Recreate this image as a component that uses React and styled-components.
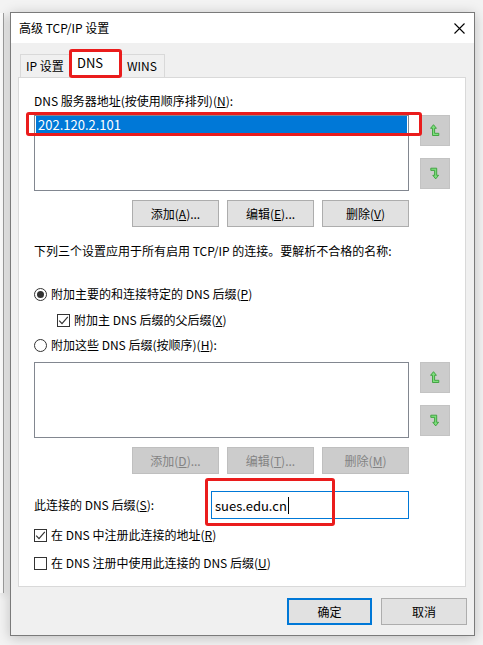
import React from "react"
import styled, { createGlobalStyle } from "styled-components"

const GlobalStyle = createGlobalStyle`
  html, body {
    margin: 0;
    padding: 0;
  }
  body {
    background: #f3f3f3;
    font-family: "Noto Sans CJK SC", "Noto Sans", sans-serif;
    font-size: 12px;
    color: #000;
  }
  * {
    box-sizing: border-box;
  }
`

const Desktop = styled.div`
  display: flex;
  align-items: flex-start;
  width: 483px;
  height: 645px;
  overflow: hidden;
`

const BackWindow = styled.div`
  width: 4px;
  height: 580px;
  margin-top: 13px;
  background: #fbfbfb;
  border-right: 1px solid #9c9c9c;
  box-shadow: 2px 3px 6px rgba(0, 0, 0, 0.12);
`

const Dialog = styled.div`
  margin: 12px 0 0 6px;
  width: 465px;
  height: 624px;
  border: 1px solid #7a7a7a;
  background: #f0f0f0;
  display: flex;
  flex-direction: column;
  box-shadow: 0 2px 12px rgba(0, 0, 0, 0.22);
`

const TitleBar = styled.div`
  height: 30px;
  flex: 0 0 30px;
  background: #fff;
  display: flex;
  align-items: center;
  justify-content: space-between;
  padding: 0 9px 0 8px;
  line-height: 16px;
`

const CloseIcon = styled.svg`
  width: 11px;
  height: 11px;
  display: block;
`

const Body = styled.div`
  flex: 1;
  display: flex;
  flex-direction: column;
  padding: 7px 6px 0 7px;
`

const TabRow = styled.div`
  display: flex;
  align-items: flex-end;
  padding-left: 2px;
  height: 27px;
`

const Tab = styled.div`
  position: relative;
  height: ${(p) => (p.$active ? "28px" : "23px")};
  width: ${(p) => p.$w}px;
  margin-left: ${(p) => (p.$active ? "-1px" : "0")};
  margin-right: ${(p) => (p.$active ? "-1px" : "0")};
  margin-bottom: ${(p) => (p.$active ? "-1px" : "0")};
  z-index: ${(p) => (p.$active ? 2 : 1)};
  background: ${(p) => (p.$active ? "#fff" : "#f0f0f0")};
  border: 1px solid #d9d9d9;
  border-bottom: none;
  padding: ${(p) => (p.$active ? "4px 0 0 7px" : "3px 0 0 5px")};
  line-height: 16px;
  font-size: ${(p) => (p.$active ? "13px" : "12px")};
`

const Highlight = styled.div`
  position: absolute;
  border: 3px solid #ea1c1c;
  border-radius: 3px;
  pointer-events: none;
  z-index: 5;
  top: ${(p) => p.$top}px;
  left: ${(p) => p.$left}px;
  width: ${(p) => p.$w}px;
  height: ${(p) => p.$h}px;
`

const Panel = styled.div`
  height: 510px;
  margin-right: 2px;
  background: #fff;
  border: 1px solid #d9d9d9;
  padding: 15px 15px 0 15px;
  display: flex;
  flex-direction: column;
`

const Label = styled.div`
  line-height: 16px;
  margin-top: ${(p) => p.$mt || 0}px;
  white-space: nowrap;
`

const ListRow = styled.div`
  display: flex;
  gap: 11px;
  margin-top: ${(p) => p.$mt}px;
`

const ListBox = styled.div`
  width: 375px;
  height: 76px;
  border: 1px solid #828790;
  background: #fff;
  padding: 0 1px;
`

const SelectedItem = styled.div`
  position: relative;
  height: 17px;
  line-height: 17px;
  background: #0078d7;
  color: #fff;
  padding-left: 2px;
  font-size: 13px;
`

const MoveColumn = styled.div`
  display: flex;
  flex-direction: column;
  gap: 12px;
`

const MoveButton = styled.div`
  width: 30px;
  height: 31px;
  background: #cccccc;
  border: 1px solid #c3c3c3;
  display: flex;
  align-items: center;
  justify-content: center;
`

const ButtonRow = styled.div`
  width: 375px;
  display: flex;
  justify-content: flex-end;
  gap: 8px;
  margin-top: 9px;
`

const Button = styled.div`
  width: ${(p) => p.$w || 87}px;
  height: 27px;
  display: flex;
  align-items: center;
  justify-content: center;
  background: ${(p) => (p.$disabled ? "#cccccc" : "#e1e1e1")};
  border: ${(p) =>
    p.$primary ? "2px solid #0078d7" : p.$disabled ? "1px solid #bfbfbf" : "1px solid #adadad"};
  color: ${(p) => (p.$disabled ? "#838383" : "#000")};
  line-height: 16px;
  white-space: nowrap;
`

const Option = styled.div`
  display: flex;
  align-items: center;
  gap: 4px;
  line-height: 16px;
  margin-top: ${(p) => p.$mt}px;
  margin-left: ${(p) => p.$ml || 0}px;
  white-space: nowrap;
`

const Radio = styled.span`
  width: 13px;
  height: 13px;
  border: 1px solid #333;
  border-radius: 50%;
  background: #fff;
  display: flex;
  align-items: center;
  justify-content: center;
  &::after {
    content: "";
    display: ${(p) => (p.$checked ? "block" : "none")};
    width: 7px;
    height: 7px;
    border-radius: 50%;
    background: #333;
  }
`

const Box = styled.span`
  width: 13px;
  height: 13px;
  border: 1px solid #333;
  background: #fff;
  display: flex;
  align-items: center;
  justify-content: center;
`

const SuffixRow = styled.div`
  width: 375px;
  display: flex;
  align-items: center;
  justify-content: space-between;
  margin-top: 17px;
`

const InputBox = styled.div`
  position: relative;
  width: 198px;
  height: 28px;
  border: 1px solid #0078d7;
  padding-left: 3px;
  display: flex;
  align-items: center;
  font-size: 13px;
`

const Caret = styled.span`
  display: inline-block;
  width: 1px;
  height: 17px;
  background: #000;
  margin-left: 1px;
`

const Footer = styled.div`
  display: flex;
  justify-content: flex-end;
  gap: 9px;
  padding: 11px 1px 0 0;
`

const UpArrow = () => (
  <svg width="10" height="13" viewBox="0 0 10 13">
    <path
      d="M3.5 0.7 L0.6 4.3 H2.5 V11.5 H8.8 V9.3 H4.6 V4.3 H6.4 Z"
      fill="#7ddf7d"
      stroke="#3a9e3a"
      strokeWidth="0.9"
      strokeLinejoin="round"
    />
  </svg>
)

const DownArrow = () => (
  <svg width="10" height="13" viewBox="0 0 10 13">
    <path
      d="M0.8 1.2 H6.7 V8.3 H8.6 L5.7 11.9 L2.8 8.3 H4.6 V3.4 H0.8 Z"
      fill="#7ddf7d"
      stroke="#3a9e3a"
      strokeWidth="0.9"
      strokeLinejoin="round"
    />
  </svg>
)

const Check = () => (
  <svg width="11" height="11" viewBox="0 0 11 11">
    <path d="M1.2 5.6 L4 8.6 L9.8 1.8" fill="none" stroke="#333" strokeWidth="1.2" />
  </svg>
)

const Movers = () => (
  <MoveColumn>
    <MoveButton>
      <UpArrow />
    </MoveButton>
    <MoveButton>
      <DownArrow />
    </MoveButton>
  </MoveColumn>
)

const App = () => {
  return (
    <Desktop>
      <GlobalStyle />
      <BackWindow />
      <Dialog>
        <TitleBar>
          <span>高级 TCP/IP 设置</span>
          <CloseIcon viewBox="0 0 11 11">
            <path d="M0.5 0.5 L10.5 10.5 M10.5 0.5 L0.5 10.5" stroke="#000" strokeWidth="1.1" />
          </CloseIcon>
        </TitleBar>
        <Body>
          <TabRow>
            <Tab $w={50}>IP 设置</Tab>
            <Tab $w={53} $active>
              DNS
              <Highlight $top={-2} $left={-1} $w={53} $h={29} />
            </Tab>
            <Tab $w={44}>WINS</Tab>
          </TabRow>
          <Panel>
            <Label>
              DNS 服务器地址(按使用顺序排列)(<u>N</u>):
            </Label>
            <ListRow $mt={6}>
              <ListBox>
                <SelectedItem>
                  202.120.2.101
                  <Highlight $top={-4} $left={-10} $w={396} $h={24} />
                </SelectedItem>
              </ListBox>
              <Movers />
            </ListRow>
            <ButtonRow>
              <Button>
                添加(<u>A</u>)...
              </Button>
              <Button>
                编辑(<u>E</u>)...
              </Button>
              <Button>
                删除(<u>V</u>)
              </Button>
            </ButtonRow>
            <Label $mt={16}>下列三个设置应用于所有启用 TCP/IP 的连接。要解析不合格的名称:</Label>
            <Option $mt={27}>
              <Radio $checked />
              <span>
                附加主要的和连接特定的 DNS 后缀(<u>P</u>)
              </span>
            </Option>
            <Option $mt={10} $ml={23}>
              <Box>
                <Check />
              </Box>
              <span>
                附加主 DNS 后缀的父后缀(<u>X</u>)
              </span>
            </Option>
            <Option $mt={9}>
              <Radio />
              <span>
                附加这些 DNS 后缀(按顺序)(<u>H</u>):
              </span>
            </Option>
            <ListRow $mt={9}>
              <ListBox />
              <Movers />
            </ListRow>
            <ButtonRow>
              <Button $disabled>
                添加(<u>D</u>)...
              </Button>
              <Button $disabled>
                编辑(<u>T</u>)...
              </Button>
              <Button $disabled>
                删除(<u>M</u>)
              </Button>
            </ButtonRow>
            <SuffixRow>
              <Label>
                此连接的 DNS 后缀(<u>S</u>):
              </Label>
              <InputBox>
                sues.edu.cn
                <Caret />
                <Highlight $top={-14} $left={-7} $w={130} $h={48} />
              </InputBox>
            </SuffixRow>
            <Option $mt={8}>
              <Box>
                <Check />
              </Box>
              <span>
                在 DNS 中注册此连接的地址(<u>R</u>)
              </span>
            </Option>
            <Option $mt={12}>
              <Box />
              <span>
                在 DNS 注册中使用此连接的 DNS 后缀(<u>U</u>)
              </span>
            </Option>
          </Panel>
          <Footer>
            <Button $primary $w={85}>
              确定
            </Button>
            <Button $w={86}>取消</Button>
          </Footer>
        </Body>
      </Dialog>
    </Desktop>
  )
}

export default App
